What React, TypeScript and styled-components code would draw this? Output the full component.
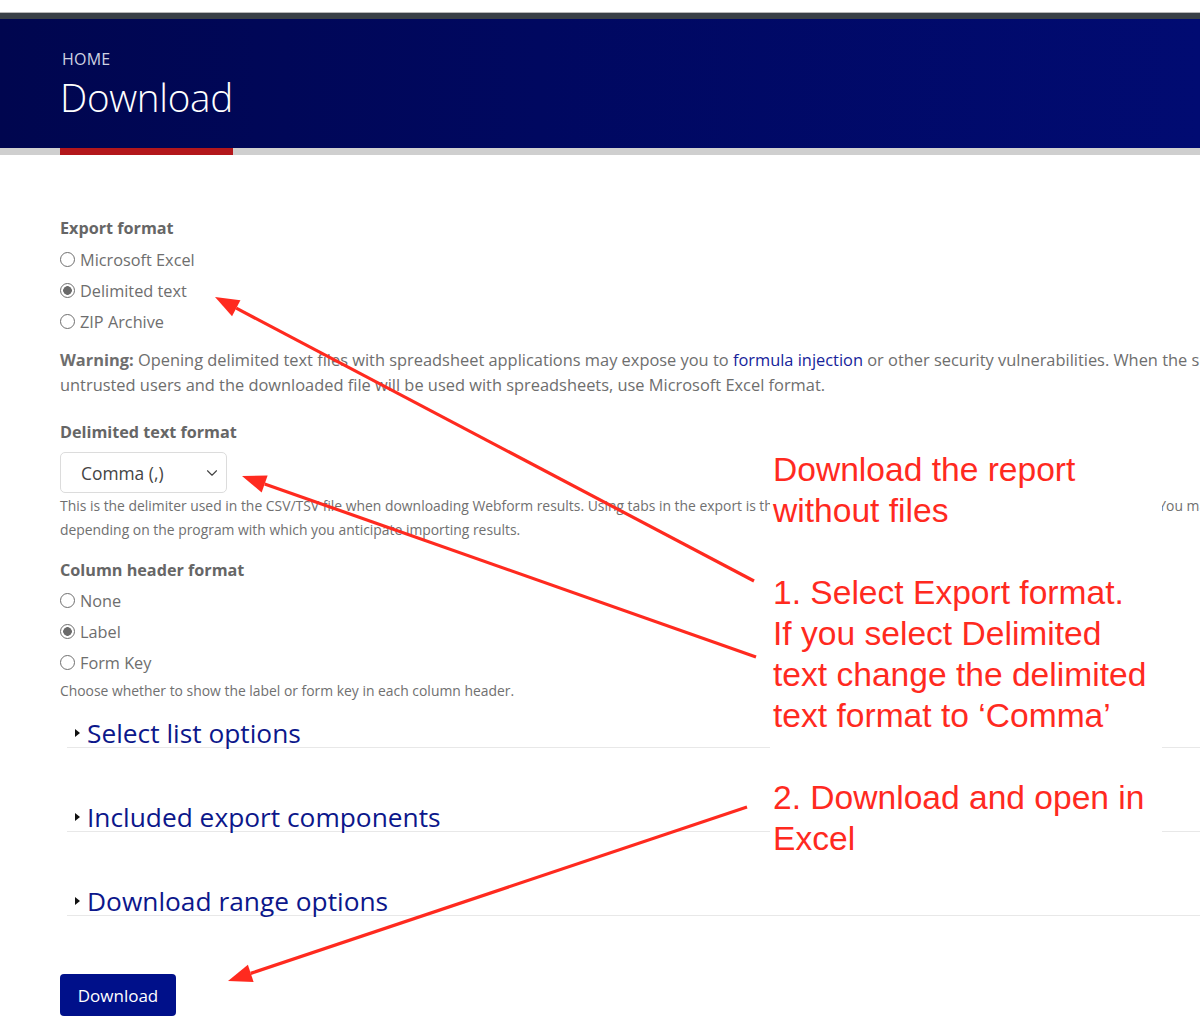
import React from "react";
import styled, { createGlobalStyle } from "styled-components";
import { ChevronDown } from "lucide-react";

const GlobalStyle = createGlobalStyle`
  html, body {
    margin: 0;
    padding: 0;
    background: #fff;
    overflow-x: hidden;
  }
  body {
    font-family: "Open Sans", "Noto Sans", sans-serif;
    color: #6b6b6b;
  }
`;

const Page = styled.div`
  position: relative;
  width: 1200px;
  overflow: hidden;
  padding-top: 12px;
  padding-bottom: 8px;
`;

const Banner = styled.header`
  border-top: 1px solid #b8b8b8;
`;

const TopStrip = styled.div`
  height: 6px;
  background: #394046;
`;

const BannerBody = styled.div`
  height: 129px;
  background: linear-gradient(90deg, #00064f 0%, #000860 45%, #010b72 100%);
  padding-left: 62px;
  box-sizing: border-box;
  display: flex;
  flex-direction: column;
  justify-content: flex-start;
`;

const Crumb = styled.div`
  margin-top: 30px;
  font-size: 16px;
  line-height: 20px;
  color: #cfd2e2;
  letter-spacing: 0.2px;
`;

const PageTitle = styled.h1`
  margin: 2px 0 0 -2px;
  font-size: 38.6px;
  line-height: 52px;
  font-weight: 300;
  color: #fff;
  letter-spacing: -0.3px;
`;

const UnderBar = styled.div`
  height: 7px;
  background: #cfcfcf;
  display: flex;
  padding-left: 60px;
`;

const RedMark = styled.div`
  width: 173px;
  background: #b3171b;
`;

const Content = styled.main`
  padding-left: 60px;
  padding-top: 61px;
`;

const FieldLabel = styled.div<{ $gap?: number }>`
  margin-top: ${(p) => p.$gap ?? 0}px;
  font-size: 16.2px;
  line-height: 24px;
  font-weight: 700;
  color: #666;
`;

const RadioList = styled.div<{ $gap: number }>`
  margin-top: ${(p) => p.$gap}px;
  display: flex;
  flex-direction: column;
`;

const RadioRow = styled.label`
  height: 31px;
  display: flex;
  align-items: center;
  gap: 5px;
  font-size: 16.3px;
  color: #6e6e6e;
`;

const RadioDot = styled.span<{ $on?: boolean }>`
  width: 15px;
  height: 15px;
  box-sizing: border-box;
  border-radius: 50%;
  border: 1px solid #6f6f6f;
  background: ${(p) =>
    p.$on ? "radial-gradient(circle, #6a6a6a 0 4px, #fff 4.6px)" : "#fff"};
`;

const Para = styled.div`
  margin-top: 10px;
  font-size: 16.4px;
  line-height: 25px;
  color: #6e6e6e;
`;

const Line = styled.div`
  white-space: nowrap;
`;

const Link = styled.a`
  color: #16239a;
  text-decoration: none;
`;

const SelectBox = styled.div`
  margin-top: 8px;
  width: 167px;
  height: 41px;
  box-sizing: border-box;
  border: 1px solid #dcdcdc;
  border-radius: 5px;
  display: flex;
  align-items: center;
  justify-content: space-between;
  padding: 0 5px 0 20px;
  font-size: 17.4px;
  color: #444;
`;

const Help = styled.div`
  margin-top: 1px;
  font-size: 13.9px;
  line-height: 24px;
  color: #707070;
`;

const Details = styled.div<{ $gap: number }>`
  margin-top: ${(p) => p.$gap}px;
  margin-left: 7px;
  border-bottom: 1px solid #e8e8e8;
`;

const Summary = styled.div`
  display: flex;
  align-items: center;
  height: 28px;
  font-size: 26.3px;
  color: #0c178b;
  &::before {
    content: "";
    width: 0;
    height: 0;
    margin: 0 7px 0 8px;
    border-top: 4px solid transparent;
    border-bottom: 4px solid transparent;
    border-left: 5px solid #111;
  }
`;

const DownloadButton = styled.button`
  margin-top: 58px;
  width: 116px;
  height: 42px;
  border: 0;
  border-radius: 4px;
  background: #00108a;
  color: #fff;
  font-family: "Open Sans", "Noto Sans", sans-serif;
  font-size: 17px;
`;

const Note = styled.div`
  position: absolute;
  left: 770px;
  top: 449px;
  width: 392px;
  height: 412px;
  background: #fff;
  padding-left: 3px;
  box-sizing: border-box;
  font-family: "Liberation Sans", Arial, sans-serif;
  font-size: 33.6px;
  line-height: 41px;
  color: #ff2a1f;
`;

const NoteGap = styled.div`
  height: 41px;
`;

const Arrows = styled.svg`
  position: absolute;
  left: 0;
  top: 0;
  pointer-events: none;
`;

type Arrow = { x1: number; y1: number; x2: number; y2: number };

const ARROWS: Arrow[] = [
  { x1: 754, y1: 581, x2: 215, y2: 297 },
  { x1: 756, y1: 657, x2: 242, y2: 476 },
  { x1: 747, y1: 807, x2: 228, y2: 981 },
];

function ArrowLine({ x1, y1, x2, y2 }: Arrow) {
  const a = Math.atan2(y1 - y2, x1 - x2);
  const len = 24;
  const half = 9;
  const bx = x2 + Math.cos(a) * len;
  const by = y2 + Math.sin(a) * len;
  const px = -Math.sin(a) * half;
  const py = Math.cos(a) * half;
  return (
    <g>
      <line x1={x1} y1={y1} x2={bx} y2={by} stroke="#ff2a1f" strokeWidth={3.2} />
      <polygon
        points={`${x2},${y2} ${bx + px},${by + py} ${bx - px},${by - py}`}
        fill="#ff2a1f"
      />
    </g>
  );
}

const EXPORT_OPTIONS = [
  { label: "Microsoft Excel", on: false },
  { label: "Delimited text", on: true },
  { label: "ZIP Archive", on: false },
];

const HEADER_OPTIONS = [
  { label: "None", on: false },
  { label: "Label", on: true },
  { label: "Form Key", on: false },
];

const SECTIONS = [
  { title: "Select list options", gap: 16 },
  { title: "Included export components", gap: 55 },
  { title: "Download range options", gap: 55 },
];

export default function App() {
  return (
    <Page>
      <GlobalStyle />
      <Banner>
        <TopStrip />
        <BannerBody>
          <Crumb>HOME</Crumb>
          <PageTitle>Download</PageTitle>
        </BannerBody>
        <UnderBar>
          <RedMark />
        </UnderBar>
      </Banner>

      <Content>
        <FieldLabel>Export format</FieldLabel>
        <RadioList $gap={4}>
          {EXPORT_OPTIONS.map((o) => (
            <RadioRow key={o.label}>
              <RadioDot $on={o.on} />
              {o.label}
            </RadioRow>
          ))}
        </RadioList>

        <Para>
          <Line>
            <b>Warning:</b> Opening delimited text files with spreadsheet applications may
            expose you to <Link href="#">formula injection</Link> or other security
            vulnerabilities. When the submissions contain data from
          </Line>
          <Line>
            untrusted users and the downloaded file will be used with spreadsheets, use
            Microsoft Excel format.
          </Line>
        </Para>

        <FieldLabel $gap={23}>Delimited text format</FieldLabel>
        <SelectBox>
          Comma (,)
          <ChevronDown size={18} strokeWidth={1.5} color="#444" />
        </SelectBox>
        <Help>
          <Line>
            This is the delimiter used in the CSV/TSV file when downloading Webform results.
            Using tabs in the export is the most reliable method for preserving non-latin
            characters. You may want to change this to another character
          </Line>
          <Line>depending on the program with which you anticipate importing results.</Line>
        </Help>

        <FieldLabel $gap={16}>Column header format</FieldLabel>
        <RadioList $gap={3}>
          {HEADER_OPTIONS.map((o) => (
            <RadioRow key={o.label}>
              <RadioDot $on={o.on} />
              {o.label}
            </RadioRow>
          ))}
        </RadioList>
        <Help>Choose whether to show the label or form key in each column header.</Help>

        {SECTIONS.map((s) => (
          <Details key={s.title} $gap={s.gap}>
            <Summary>{s.title}</Summary>
          </Details>
        ))}

        <DownloadButton type="button">Download</DownloadButton>
      </Content>

      <Note>
        <div>Download the report</div>
        <div>without files</div>
        <NoteGap />
        <div>1. Select Export format.</div>
        <div>If you select Delimited</div>
        <div>text change the delimited</div>
        <div>text format to ‘Comma’</div>
        <NoteGap />
        <div>2. Download and open in</div>
        <div>Excel</div>
      </Note>

      <Arrows width={1200} height={1024} viewBox="0 0 1200 1024">
        {ARROWS.map((a, i) => (
          <ArrowLine key={i} {...a} />
        ))}
      </Arrows>
    </Page>
  );
}
